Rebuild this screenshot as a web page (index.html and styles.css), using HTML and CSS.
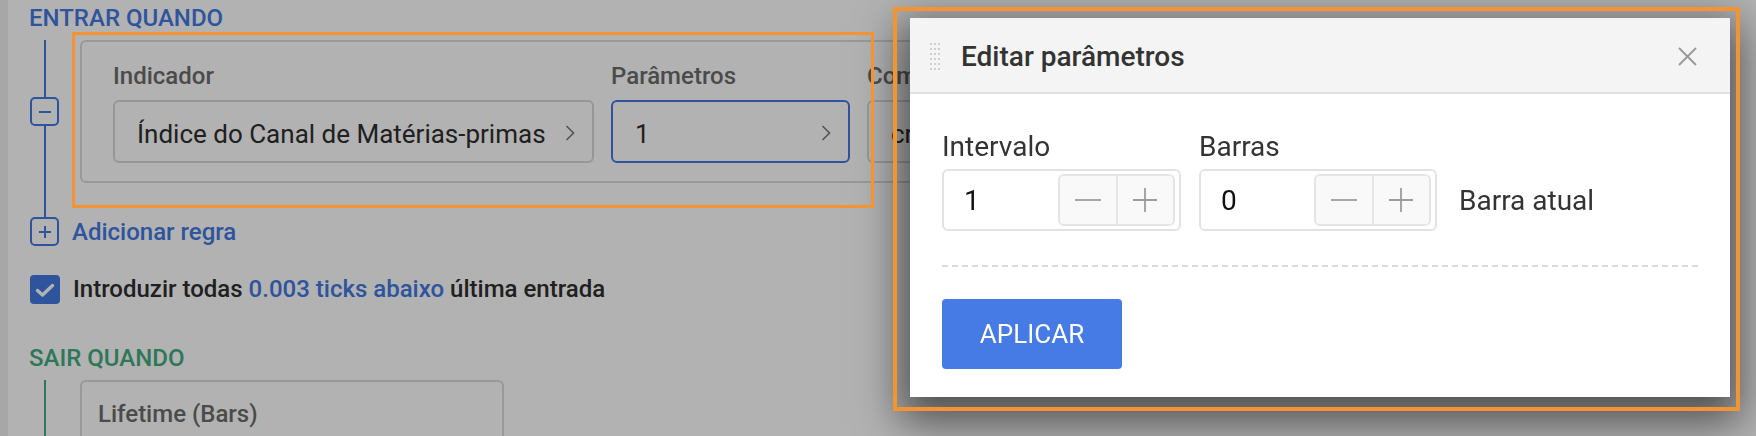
FILE: index.html
```html
<!DOCTYPE html>
<html lang="pt">
<head>
<meta charset="utf-8">
<title>Editar parâmetros</title>
<link rel="stylesheet" href="styles.css">
</head>
<body>
<div class="page">
  <div class="strip"></div>
  <main class="content">
    <h2 class="section-title enter">ENTRAR QUANDO</h2>
    <div class="tree tree-blue">
      <div class="rule-row">
        <div class="gutter">
          <span class="node-btn"><svg width="14" height="14" viewBox="0 0 14 14"><path d="M1 7H13" stroke="currentColor" stroke-width="2"/></svg></span>
        </div>
        <div class="card">
          <div class="field">
            <div class="label">Indicador</div>
            <div class="select"><span class="select-text">Índice do Canal de Matérias-primas</span><svg class="chev" width="10" height="16" viewBox="0 0 10 16"><path d="M1.5 1L8.5 8L1.5 15" fill="none" stroke="#7a7a7a" stroke-width="1.6"/></svg></div>
          </div>
          <div class="field">
            <div class="label">Parâmetros</div>
            <div class="select active"><span class="select-text">1</span><svg class="chev" width="10" height="16" viewBox="0 0 10 16"><path d="M1.5 1L8.5 8L1.5 15" fill="none" stroke="#7a7a7a" stroke-width="1.6"/></svg></div>
          </div>
          <div class="field">
            <div class="label">Comparação</div>
            <div class="select"><span class="select-text">cruza acima</span><svg class="chev" width="10" height="16" viewBox="0 0 10 16"><path d="M1.5 1L8.5 8L1.5 15" fill="none" stroke="#7a7a7a" stroke-width="1.6"/></svg></div>
          </div>
        </div>
      </div>
      <div class="add-row">
        <span class="node-btn"><svg width="14" height="14" viewBox="0 0 14 14"><path d="M1 7H13M7 1V13" stroke="currentColor" stroke-width="2"/></svg></span>
        <span class="add-text">Adicionar regra</span>
      </div>
    </div>
    <div class="check-row">
      <span class="checkbox"><svg width="30" height="29" viewBox="0 0 30 29"><path d="M7.5 15.5L12.5 20L22.5 10.5" fill="none" stroke="#fff" stroke-width="3.4" stroke-linecap="round" stroke-linejoin="round"/></svg></span>
      <span class="check-text">Introduzir todas <span class="link">0.003 ticks abaixo</span> última entrada</span>
    </div>
    <h2 class="section-title exit">SAIR QUANDO</h2>
    <div class="tree tree-green">
      <div class="rule-row">
        <div class="gutter"></div>
        <div class="card card-exit">
          <div class="label">Lifetime (Bars)</div>
        </div>
      </div>
    </div>
  </main>
</div>

<div class="dim"></div>

<div class="modal">
  <div class="modal-head">
    <svg class="handle" width="10" height="27" viewBox="0 0 10 27">
      <g fill="#c3c3c3">
        <circle cx="1" cy="1" r="1"/><circle cx="5" cy="1" r="1"/><circle cx="9" cy="1" r="1"/>
        <circle cx="1" cy="6" r="1"/><circle cx="5" cy="6" r="1"/><circle cx="9" cy="6" r="1"/>
        <circle cx="1" cy="11" r="1"/><circle cx="5" cy="11" r="1"/><circle cx="9" cy="11" r="1"/>
        <circle cx="1" cy="16" r="1"/><circle cx="5" cy="16" r="1"/><circle cx="9" cy="16" r="1"/>
        <circle cx="1" cy="21" r="1"/><circle cx="5" cy="21" r="1"/><circle cx="9" cy="21" r="1"/>
        <circle cx="1" cy="26" r="1"/><circle cx="5" cy="26" r="1"/><circle cx="9" cy="26" r="1"/>
      </g>
    </svg>
    <span class="modal-title">Editar parâmetros</span>
    <svg class="close" width="19" height="19" viewBox="0 0 19 19"><path d="M1 1L18 18M18 1L1 18" stroke="#9b9b9b" stroke-width="2"/></svg>
  </div>
  <div class="modal-body">
    <div class="fields">
      <div class="f-label">Intervalo</div>
      <div class="f-label">Barras</div>
      <div class="f-label"></div>
      <div class="num-input">
        <span class="num-value">1</span>
        <span class="stepper">
          <span class="step"><svg width="26" height="2" viewBox="0 0 26 2"><path d="M0 1H26" stroke="#9c9c9c" stroke-width="1.8"/></svg></span>
          <span class="step"><svg width="24" height="24" viewBox="0 0 24 24"><path d="M0 12H24M12 0V24" stroke="#9c9c9c" stroke-width="1.8"/></svg></span>
        </span>
      </div>
      <div class="num-input">
        <span class="num-value">0</span>
        <span class="stepper">
          <span class="step"><svg width="26" height="2" viewBox="0 0 26 2"><path d="M0 1H26" stroke="#9c9c9c" stroke-width="1.8"/></svg></span>
          <span class="step"><svg width="24" height="24" viewBox="0 0 24 24"><path d="M0 12H24M12 0V24" stroke="#9c9c9c" stroke-width="1.8"/></svg></span>
        </span>
      </div>
      <div class="suffix">Barra atual</div>
    </div>
    <div class="divider"></div>
    <button class="apply">APLICAR</button>
  </div>
</div>

<div class="mark mark-rule"></div>
<div class="mark mark-modal"></div>
</body>
</html>
```

FILE: styles.css
```css
html, body {
  margin: 0;
  padding: 0;
}
body {
  width: 1756px;
  height: 436px;
  overflow: hidden;
  position: relative;
  font-family: Roboto, "Liberation Sans", sans-serif;
  background: #fff;
}
.page {
  display: flex;
  height: 436px;
  overflow: hidden;
  background: #fff;
}
.strip {
  width: 8px;
  flex: none;
  background: #f0f0f0;
}
.content {
  flex: 1;
  padding: 4px 120px 0 21px;
}
.section-title {
  margin: 0;
  font-size: 24px;
  line-height: 28px;
  font-weight: 500;
}
.enter { color: #4279e2; margin-bottom: 8px; }
.exit { color: #43ad80; margin-top: 40px; margin-bottom: 8px; }

.tree {
  background-repeat: no-repeat;
  background-position: 15px 0;
}
.tree-blue {
  background-image: linear-gradient(#4279e2, #4279e2);
  background-size: 2px calc(100% - 29px);
}
.tree-green {
  background-image: linear-gradient(#43ad80, #43ad80);
  background-size: 2px 100%;
}
.rule-row {
  display: flex;
}
.gutter {
  width: 51px;
  flex: none;
  display: flex;
  align-items: center;
}
.node-btn {
  width: 29px;
  height: 29px;
  box-sizing: border-box;
  margin-left: 1px;
  border: 2px solid #4279e2;
  border-radius: 5px;
  background: #fff;
  color: #4279e2;
  display: flex;
  align-items: center;
  justify-content: center;
}
.card {
  flex: 1;
  border: 2px solid #dadada;
  border-radius: 6px;
  padding: 20px 31px 18px;
  display: grid;
  grid-template-columns: 481px 239px 240px;
  column-gap: 17px;
}
.label {
  font-size: 24px;
  line-height: 28px;
  font-weight: 500;
  color: #6c6c6c;
  white-space: nowrap;
}
.select {
  margin-top: 10px;
  height: 63px;
  box-sizing: border-box;
  border: 2px solid #d8d8d8;
  border-radius: 6px;
  display: flex;
  align-items: center;
  padding: 4px 17px 0 22px;
}
.select.active {
  border-color: #4279e2;
}
.select-text {
  flex: 1;
  font-size: 26px;
  color: #2e2e2e;
  white-space: nowrap;
  overflow: hidden;
}
.chev { flex: none; margin-top: -1px; }

.add-row {
  margin-top: 34px;
  display: flex;
  align-items: center;
  gap: 13px;
}
.add-text {
  font-size: 24px;
  line-height: 28px;
  font-weight: 500;
  color: #4279e2;
}
.check-row {
  margin-top: 28px;
  display: flex;
  align-items: center;
  gap: 13px;
  height: 30px;
}
.checkbox {
  width: 30px;
  height: 29px;
  margin-left: 1px;
  border-radius: 4px;
  background: #4279e2;
  display: block;
}
.checkbox svg { display: block; }
.check-text {
  font-size: 24px;
  line-height: 28px;
  font-weight: 500;
  color: #2e2e2e;
  white-space: nowrap;
}
.link { color: #4279e2; }

.card-exit {
  flex: none;
  width: 424px;
  height: 140px;
  box-sizing: border-box;
  display: block;
  padding: 18px 16px;
}

.dim {
  position: fixed;
  inset: 0;
  background: rgba(0, 0, 0, 0.3);
}

.modal {
  position: absolute;
  left: 910px;
  top: 18px;
  width: 820px;
  background: #fff;
  box-shadow: 0 15px 40px 10px rgba(0, 0, 0, 0.55);
}
.modal-head {
  height: 71px;
  padding: 3px 33px 0 20px;
  background: #f4f4f4;
  border-bottom: 2px solid #e1e1e1;
  display: flex;
  align-items: center;
}
.handle { flex: none; margin-right: 21px; }
.modal-title {
  flex: 1;
  font-size: 28px;
  font-weight: 500;
  color: #333;
}
.close { flex: none; }
.modal-body {
  padding: 37px 32px 28px;
}
.fields {
  display: grid;
  grid-template-columns: 239px 238px auto;
  grid-template-rows: 31px 62px;
  column-gap: 18px;
  row-gap: 7px;
}
.f-label {
  font-size: 28px;
  line-height: 31px;
  color: #333;
}
.num-input {
  box-sizing: border-box;
  border: 2px solid #e3e3e3;
  border-radius: 6px;
  display: flex;
  align-items: center;
  padding: 0 4px 0 20px;
}
.num-value {
  flex: 1;
  font-size: 28px;
  color: #111;
}
.stepper {
  display: flex;
  width: 117px;
  height: 52px;
  box-sizing: border-box;
  border: 2px solid #e5e5e5;
  border-radius: 6px;
  background: #f9f9f9;
}
.step {
  flex: 1;
  display: flex;
  align-items: center;
  justify-content: center;
}
.step + .step {
  border-left: 2px solid #e5e5e5;
}
.suffix {
  align-self: center;
  margin-left: 4px;
  font-size: 28px;
  color: #333;
  white-space: nowrap;
}
.divider {
  height: 2px;
  margin: 34px 0 32px;
  background: repeating-linear-gradient(90deg, #d9d9d9 0 6px, transparent 6px 10px);
}
.apply {
  display: block;
  width: 180px;
  height: 70px;
  border: 0;
  border-radius: 4px;
  background: #467be5;
  color: #fff;
  font-family: Roboto, "Liberation Sans", sans-serif;
  font-size: 26px;
  padding: 0;
}

.mark {
  position: absolute;
  box-sizing: border-box;
  border: 3px solid #f29432;
}
.mark-rule {
  left: 72px;
  top: 32px;
  width: 802px;
  height: 176px;
}
.mark-modal {
  left: 893px;
  top: 7px;
  width: 847px;
  height: 404px;
  border-width: 4px;
}
```
